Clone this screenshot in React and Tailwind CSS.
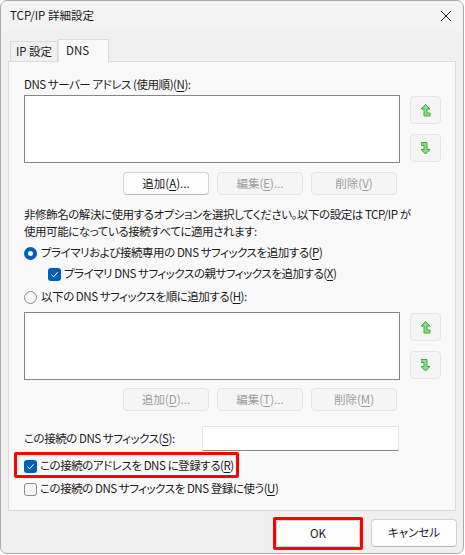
import React from "react";

const font = {
  fontFamily: '"Noto Sans CJK JP", sans-serif',
};

function U({ children }) {
  return <span className="underline underline-offset-2 decoration-1">{children}</span>;
}

function Btn({ children, disabled, className = "" }) {
  return (
    <div
      className={
        "flex items-center justify-center rounded-[4px] border h-[23px] w-[86px] " +
        (disabled
          ? "bg-[#f5f5f5] border-[#e5e5e5] text-[#9d9d9d] "
          : "bg-[#fdfdfd] border-[#d1d1d1] border-b-[#b8b8b8] text-[#1b1b1b] ") +
        className
      }
    >
      {children}
    </div>
  );
}

function UpArrow() {
  return (
    <svg width="10" height="13" viewBox="0 0 10 13">
      <path
        d="M4.5 0.5 L9 5 L6 5 L6 9 L9 9 L9 12 L3 12 L3 5 L0 5 Z"
        fill="#86e086"
        stroke="#3cab3c"
        strokeWidth="1"
      />
    </svg>
  );
}

function DownArrow() {
  return (
    <svg width="10" height="13" viewBox="0 0 10 13">
      <path
        d="M0 0.5 L6 0.5 L6 7.5 L9 7.5 L4.5 12 L0 7.5 L3 7.5 L3 3.5 L0 3.5 Z"
        fill="#86e086"
        stroke="#3cab3c"
        strokeWidth="1"
      />
    </svg>
  );
}

function ArrowBtn({ children }) {
  return (
    <div className="flex items-center justify-center w-[31px] h-[28px] rounded-[4px] border border-[#e5e5e5] bg-[#f5f5f5]">
      {children}
    </div>
  );
}

function Radio({ checked }) {
  return checked ? (
    <div className="w-[13px] h-[13px] rounded-full bg-[#005fb8] flex items-center justify-center">
      <div className="w-[5px] h-[5px] rounded-full bg-white" />
    </div>
  ) : (
    <div className="w-[13px] h-[13px] rounded-full border border-[#8a8a8a] bg-[#f6f6f6]" />
  );
}

function Check({ checked }) {
  return checked ? (
    <div className="w-[13px] h-[13px] rounded-[3px] bg-[#005fb8] flex items-center justify-center">
      <svg width="9" height="9" viewBox="0 0 9 9">
        <path d="M1.5 4.8 L3.6 6.8 L7.6 2.2" fill="none" stroke="white" strokeWidth="1" />
      </svg>
    </div>
  ) : (
    <div className="w-[13px] h-[13px] rounded-[3px] border border-[#8a8a8a] bg-[#f6f6f6]" />
  );
}

function ListBlock({ buttons }) {
  return (
    <>
      <div className="flex gap-[10px]">
        <div className="w-[376px] h-[68px] bg-white border border-[#868686]" />
        <div className="flex flex-col justify-between py-[1px]">
          <ArrowBtn>
            <UpArrow />
          </ArrowBtn>
          <ArrowBtn>
            <DownArrow />
          </ArrowBtn>
        </div>
      </div>
      <div className="flex gap-[8px] ml-[99px]">{buttons}</div>
    </>
  );
}

export default function App() {
  return (
    <div
      className="w-[465px] h-[555px] bg-white text-[11.5px] text-[#1b1b1b] [font-feature-settings:'palt']"
      style={font}
    >
      <div className="w-[464px] h-[554px] rounded-[7px] border border-[#a9a9a9] bg-[#f0f0f0] flex flex-col overflow-hidden">
        {/* title bar */}
        <div className="h-[30px] flex items-center justify-between pl-[9px] pr-[11px] bg-[#f3f3f3]">
          <span>TCP/IP 詳細設定</span>
          <svg width="12" height="12" viewBox="0 0 12 12">
            <path d="M1 1 L11 11 M11 1 L1 11" stroke="#1b1b1b" strokeWidth="1" />
          </svg>
        </div>

        {/* tabs */}
        <div className="flex items-end h-[30px] pl-[9px]">
          <div className="w-[48px] h-[20px] border border-b-0 border-[#dcdcdc] bg-[#f0f0f0] flex items-center justify-center">
            IP 設定
          </div>
          <div className="w-[51px] h-[23px] -mb-px relative z-10 border border-b-0 border-[#dcdcdc] bg-[#f9f9f9] pl-[7px] pt-[2px]">
            DNS
          </div>
        </div>

        {/* panel */}
        <div className="mx-[7px] h-[450px] border border-[#dcdcdc] bg-[#f9f9f9] pl-[15px] flex flex-col tracking-[-0.45px]">
          <div className="h-[16px] mt-[15px] flex items-center">
            DNS サーバー アドレス (使用順)(<U>N</U>):
          </div>
          <div className="mt-[2px] flex flex-col gap-[9px] tracking-normal">
            <ListBlock
              buttons={
                <>
                  <Btn>
                    追加(<U>A</U>)...
                  </Btn>
                  <Btn disabled>
                    編集(<U>E</U>)...
                  </Btn>
                  <Btn disabled>
                    削除(<U>V</U>)
                  </Btn>
                </>
              }
            />
          </div>

          <div className="mt-[11px] leading-[17px]">
            <div>非修飾名の解決に使用するオプションを選択してください。以下の設定は TCP/IP が</div>
            <div>使用可能になっている接続すべてに適用されます:</div>
          </div>

          <div className="mt-[3px] h-[20px] flex items-center gap-[4px]">
            <Radio checked />
            <span>
              プライマリおよび接続専用の DNS サフィックスを追加する(<U>P</U>)
            </span>
          </div>
          <div className="mt-[1px] h-[20px] flex items-center gap-[3px] pl-[24px]">
            <Check checked />
            <span>
              プライマリ DNS サフィックスの親サフィックスを追加する(<U>X</U>)
            </span>
          </div>
          <div className="mt-[3px] h-[20px] flex items-center gap-[4px]">
            <Radio />
            <span>
              以下の DNS サフィックスを順に追加する(<U>H</U>):
            </span>
          </div>

          <div className="mt-[5px] flex flex-col gap-[8px] tracking-normal">
            <ListBlock
              buttons={
                <>
                  <Btn disabled>
                    追加(<U>D</U>)...
                  </Btn>
                  <Btn disabled>
                    編集(<U>T</U>)...
                  </Btn>
                  <Btn disabled>
                    削除(<U>M</U>)
                  </Btn>
                </>
              }
            />
          </div>

          <div className="mt-[15px] h-[25px] flex items-center">
            <span className="w-[178px]">
              この接続の DNS サフィックス(<U>S</U>):
            </span>
            <div className="w-[197px] h-[25px] bg-white border border-[#e5e5e5] border-b-[#868686]" />
          </div>

          <div className="mt-[5px] h-[20px] flex items-center gap-[3px] relative">
            <div className="absolute -left-[10px] -top-[4px] w-[225px] h-[26px] border-[3px] border-[#ff0000] rounded-[2px]" />
            <Check checked />
            <span>
              この接続のアドレスを DNS に登録する(<U>R</U>)
            </span>
          </div>
          <div className="mt-[3px] h-[20px] flex items-center gap-[3px]">
            <Check />
            <span>
              この接続の DNS サフィックスを DNS 登録に使う(<U>U</U>)
            </span>
          </div>
        </div>

        {/* bottom buttons */}
        <div className="flex justify-end gap-[8px] pr-[6px] mt-[6px]">
          <div className="w-[90px] h-[33px] border-[3px] border-[#ff0000] rounded-[2px] flex items-center justify-center">
            <div className="w-[84px] h-[27px] rounded-[4px] border border-[#d1d1d1] bg-[#fdfdfd] flex items-center justify-center">
              OK
            </div>
          </div>
          <div className="w-[86px] h-[28px] mt-[2px] rounded-[4px] border border-[#d1d1d1] border-b-[#b8b8b8] bg-[#fdfdfd] flex items-center justify-center">
            キャンセル
          </div>
        </div>
      </div>
    </div>
  );
}
